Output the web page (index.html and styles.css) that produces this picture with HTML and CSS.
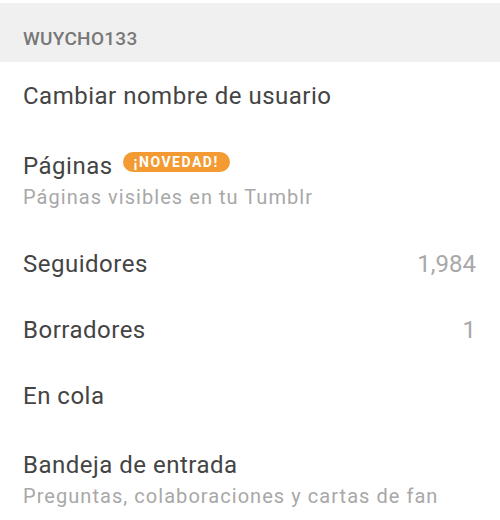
FILE: index.html
```html
<!DOCTYPE html>
<html lang="es">
<head>
    <meta charset="UTF-8">
    <meta name="viewport" content="width=device-width, initial-scale=1.0">
    <title>Cuenta</title>
    <link rel="stylesheet" href="styles.css">
</head>
<body>
    <div class="settings">
        <div class="section-header">WUYCHO133</div>
        <div class="row row-first">
            <span class="row-title">Cambiar nombre de usuario</span>
        </div>
        <div class="row row-double row-pages">
            <div class="row-text">
                <span class="row-title">Páginas <span class="badge">¡NOVEDAD!</span></span>
                <span class="row-sub">Páginas visibles en tu Tumblr</span>
            </div>
        </div>
        <div class="row">
            <span class="row-title">Seguidores</span>
            <span class="row-value">1,984</span>
        </div>
        <div class="row">
            <span class="row-title">Borradores</span>
            <span class="row-value">1</span>
        </div>
        <div class="row">
            <span class="row-title">En cola</span>
        </div>
        <div class="row row-double">
            <div class="row-text">
                <span class="row-title">Bandeja de entrada</span>
                <span class="row-sub">Preguntas, colaboraciones y cartas de fan</span>
            </div>
        </div>
    </div>
</body>
</html>
```

FILE: styles.css
```css
body {
    margin: 0;
    font-family: Roboto, "Liberation Sans", sans-serif;
    background-color: #fff;
}
.settings {
    padding-top: 3px;
}
.section-header {
    height: 59px;
    box-sizing: border-box;
    padding: 25px 23px 0;
    line-height: 22px;
    background-color: #f0f0f0;
    color: #777;
    font-size: 19px;
    font-weight: 500;
    letter-spacing: 0.3px;
}
.row {
    height: 66px;
    display: flex;
    align-items: center;
    justify-content: space-between;
    padding: 0 24px 0 23px;
}
.row-first {
    height: 68px;
}
.row-double {
    height: 98px;
    box-sizing: border-box;
    padding-top: 22px;
    align-items: flex-start;
}
.row-pages {
    height: 101px;
}
.row-text {
    display: flex;
    flex-direction: column;
    gap: 5px;
}
.row-title {
    display: flex;
    align-items: center;
    line-height: 28px;
    font-size: 24px;
    letter-spacing: 0.5px;
    color: #444;
}
.row-sub {
    line-height: 24px;
    font-size: 20px;
    letter-spacing: 1.05px;
    color: #a8a8a8;
}
.row-value {
    line-height: 28px;
    font-size: 24px;
    color: #a8a8a8;
}
.badge {
    align-self: flex-start;
    margin: 0 0 0 10px;
    padding: 0 11px;
    height: 20px;
    line-height: 20px;
    border-radius: 10px;
    background-color: #f39a32;
    color: #fff;
    font-size: 14px;
    font-weight: 700;
    letter-spacing: 1.5px;
}
```
